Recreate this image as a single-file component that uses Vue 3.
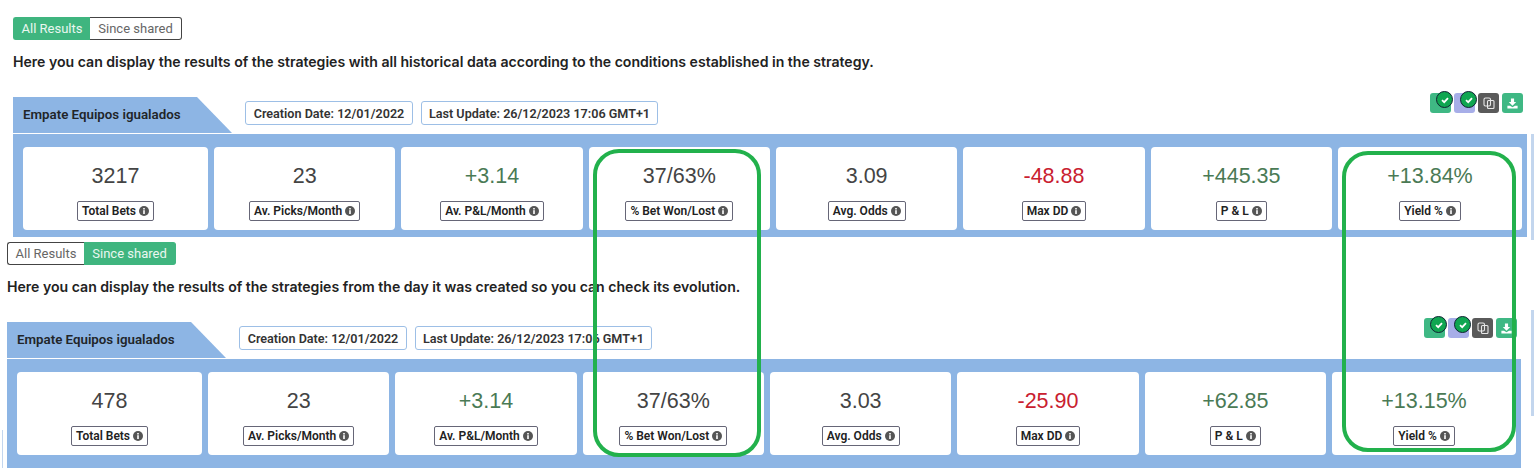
<script setup>
const sections = [
  {
    cls: 'first', active: 0,
    text: 'Here you can display the results of the strategies with all historical data according to the conditions established in the strategy.',
    update: '26/12/2023 17:06 GMT+1',
    stats: [
      ['3217', 'Total Bets', ''], ['23', 'Av. Picks/Month', ''], ['+3.14', 'Av. P&L/Month', 'pos'],
      ['37/63%', '% Bet Won/Lost', ''], ['3.09', 'Avg. Odds', ''], ['-48.88', 'Max DD', 'neg'],
      ['+445.35', 'P & L', 'pos'], ['+13.84%', 'Yield %', 'pos']
    ]
  },
  {
    cls: 'second', active: 1,
    text: 'Here you can display the results of the strategies from the day it was created so you can check its evolution.',
    update: '26/12/2023 17:06 GMT+1',
    stats: [
      ['478', 'Total Bets', ''], ['23', 'Av. Picks/Month', ''], ['+3.14', 'Av. P&L/Month', 'pos'],
      ['37/63%', '% Bet Won/Lost', ''], ['3.03', 'Avg. Odds', ''], ['-25.90', 'Max DD', 'neg'],
      ['+62.85', 'P & L', 'pos'], ['+13.15%', 'Yield %', 'pos']
    ]
  }
]
</script>

<template>
  <div class="page">
    <section v-for="s in sections" :key="s.cls" class="block" :class="s.cls">
      <div class="toggle">
        <span class="opt" :class="{ on: s.active === 0 }">All Results</span>
        <span class="opt" :class="{ on: s.active === 1 }">Since shared</span>
      </div>
      <p class="intro">{{ s.text }}</p>
      <div class="head">
        <div class="tab">Empate Equipos igualados</div>
        <span class="date d1">Creation Date: 12/01/2022</span>
        <span class="date d2">Last Update: {{ s.update }}</span>
        <div class="actions">
          <span class="act green">
            <span class="check"><svg viewBox="0 0 12 12"><path d="M3 6.200 5.200 8.200 9 4.200" /></svg></span>
          </span>
          <span class="act purple">
            <span class="check"><svg viewBox="0 0 12 12"><path d="M3 6.200 5.200 8.200 9 4.200" /></svg></span>
          </span>
          <span class="act gray">
            <svg viewBox="0 0 14 14" class="copy"><rect x="2" y="2" width="6.500" height="8" rx="1.500" /><rect x="5.500" y="4.500" width="6.500" height="8" rx="1" /></svg>
          </span>
          <span class="act green">
            <svg viewBox="0 0 14 14" class="dl"><path d="M5.300 1.500h3.400v4h2.300L7 9.500 3 5.500h2.300z" /><path d="M1.500 9.500h2.800L7 11l2.700-1.500h2.800V12.500h-11z" /></svg>
          </span>
        </div>
      </div>
      <div class="strip">
        <div v-for="st in s.stats" :key="st[1]" class="card">
          <div class="value" :class="st[2]">{{ st[0] }}</div>
          <div class="label">
            {{ st[1] }}
            <svg class="info" viewBox="0 0 10 10"><circle cx="5" cy="5" r="5" /><rect x="4.200" y="4.200" width="1.600" height="3.800" fill="#fff" /><rect x="4.200" y="2" width="1.600" height="1.500" fill="#fff" /></svg>
          </div>
        </div>
      </div>
    </section>

    <div class="side s1"></div>
    <div class="side s2"></div>
    <div class="tick"></div>
    <div class="mark m1"></div>
    <div class="mark m2"></div>
  </div>
</template>

<style>
html, body { margin: 0; background: #fff; }
</style>

<style scoped>
.page {
  position: relative;
  height: 468px;
  overflow: hidden;
  font-family: "Roboto", "Liberation Sans", sans-serif;
  color: #212529;
  background: #fff;
}
.block { width: 1514px; height: 225px; box-sizing: border-box; padding-top: 17px; }
.first { margin-left: 13px; }
.second { margin-left: 7px; height: 243px; }
.toggle { display: flex; width: 169px; height: 23px; font-size: 13px; }
.opt {
  flex: 1 1 auto;
  display: flex;
  align-items: center;
  justify-content: center;
  box-sizing: border-box;
  color: #666;
  border: 1px solid #444;
  background: #fff;
}
.opt:first-child { border-radius: 3px 0 0 3px; border-right: 0; width: 77px; flex: none; }
.opt:last-child { border-radius: 0 3px 3px 0; border-left: 0; }
.opt.on { color: #eaf7f0; background: #3fb57f; border-color: #3fb57f; }
.intro {
  margin: 12px 0 0;
  height: 20px;
  line-height: 20px;
  font-family: "Inter", "Liberation Sans", sans-serif;
  font-size: 14.080px;
  font-weight: 600;
  color: #222;
  white-space: nowrap;
}
.head {
  display: flex;
  align-items: flex-start;
  height: 37px;
  margin-top: 25px;
  position: relative;
}
.tab {
  width: 219px;
  height: 36px;
  box-sizing: border-box;
  padding: 9px 0 0 10px;
  font-size: 13.300px;
  font-weight: 600;
  line-height: 18px;
  background: #8db5e4;
  clip-path: polygon(0 0, 184px 0, 100% 100%, 0 100%);
}
.date {
  height: 24px;
  margin-top: 4px;
  box-sizing: border-box;
  display: flex;
  align-items: center;
  justify-content: center;
  border: 1px solid #9dbfe6;
  border-radius: 3px;
  font-size: 12.600px;
  font-weight: 600;
  color: #333;
  white-space: nowrap;
}
.d1 { width: 168px; margin-left: 13px; }
.d2 { width: 237px; margin-left: 8px; }
.actions {
  margin-left: auto;
  margin-top: -4px;
  margin-right: 4px;
  display: flex;
  gap: 3px;
}
.act {
  position: relative;
  width: 21px;
  height: 20px;
  border-radius: 3px;
  display: flex;
  align-items: center;
  justify-content: center;
}
.green { background: #3fb884; }
.purple { background: #a7aee8; }
.gray { background: #5a5a5a; }
.check {
  position: absolute;
  left: 6px;
  top: -2px;
  width: 17px;
  height: 17px;
  box-sizing: border-box;
  border: 1px solid #123;
  border-radius: 50%;
  background: #0fa651;
  display: flex;
  align-items: center;
  justify-content: center;
}
.check svg { width: 12px; height: 12px; fill: none; stroke: #fff; stroke-width: 1.800; }
.copy { width: 14px; height: 14px; fill: none; stroke: #e8e8e8; stroke-width: 1.100; }
.dl { width: 13px; height: 13px; fill: #fff; }
.strip {
  display: grid;
  grid-template-columns: 185px repeat(6, 1fr) 184px;
  column-gap: 6px;
  height: 103px;
  box-sizing: border-box;
  padding: 13px 5px 0 10px;
  background: #8db5e4;
}
.second .strip { height: 109px; }
.card {
  height: 83px;
  background: #fff;
  border-radius: 4px;
  display: flex;
  flex-direction: column;
  align-items: center;
}
.value {
  margin-top: 16px;
  height: 26px;
  line-height: 26px;
  font-family: "Liberation Sans", sans-serif;
  font-size: 21.500px;
  color: #444;
}
.value.pos { color: #4a7a55; }
.value.neg { color: #c9202f; }
.label {
  margin-top: 12px;
  height: 20px;
  box-sizing: border-box;
  padding: 0 4px;
  display: flex;
  align-items: center;
  gap: 3px;
  border: 1px solid #667;
  border-radius: 2px;
  font-size: 12px;
  font-weight: 600;
  color: #222;
  white-space: nowrap;
}
.info { width: 10px; height: 10px; fill: #555; }
.side { position: absolute; left: 1531px; width: 3px; background: #c3d6ee; }
.s1 { top: 134px; height: 106px; }
.s2 { top: 310px; height: 106px; }
.tick { position: absolute; left: 2px; top: 430px; width: 1px; height: 38px; background: #c3d6ee; }
.mark {
  position: absolute;
  box-sizing: border-box;
  border: 4px solid #22b14c;
  border-radius: 26px;
  pointer-events: none;
}
.m1 { left: 593px; top: 149px; width: 168px; height: 308px; }
.m2 { left: 1342px; top: 151px; width: 174px; height: 301px; }
</style>
